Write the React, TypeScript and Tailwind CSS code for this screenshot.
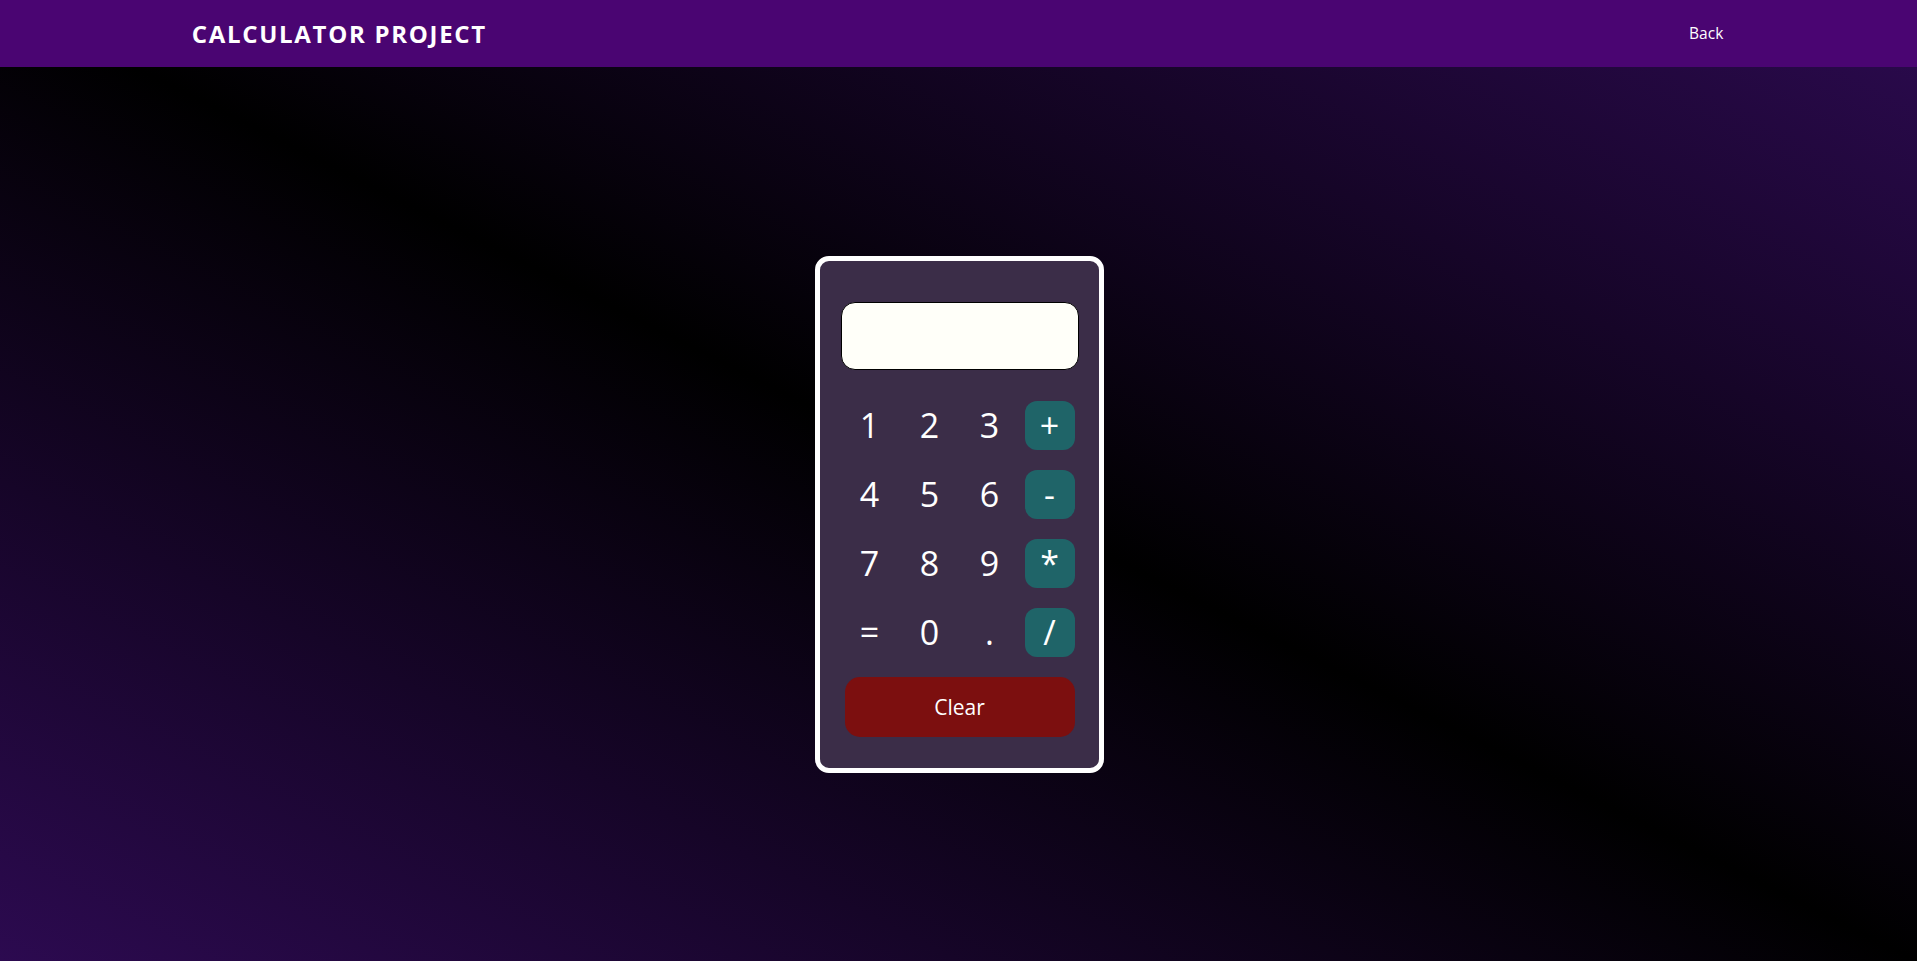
import React from "react";

const keys: { label: string; op?: boolean }[] = [
  { label: "1" }, { label: "2" }, { label: "3" }, { label: "+", op: true },
  { label: "4" }, { label: "5" }, { label: "6" }, { label: "-", op: true },
  { label: "7" }, { label: "8" }, { label: "9" }, { label: "*", op: true },
  { label: "=" }, { label: "0" }, { label: "." }, { label: "/", op: true },
];

export default function App() {
  return (
    <div
      className="min-h-screen w-full flex flex-col bg-[linear-gradient(to_bottom_left,#2c0a50_0%,#000_50%,#2c0a50_100%)]"
      style={{ fontFamily: '"Open Sans", "Liberation Sans", sans-serif' }}
    >
      <header className="h-[67px] bg-[#4a0572] flex items-center justify-between pl-[10%] pr-[calc(10%+2px)] shrink-0">
        <h1 className="text-[24px] font-bold tracking-[1.7px] text-white leading-none">CALCULATOR PROJECT</h1>
        <a className="text-[15.5px] text-white leading-none cursor-pointer">Back</a>
      </header>
      <main className="flex-1 flex items-center justify-center pl-[1px]">
        <div className="w-[289px] h-[517px] border-[5px] border-white rounded-[14px] bg-[#3b2d48] pt-[41px] pl-[21px] pr-[20px] flex flex-col">
          <div className="w-[238px] h-[68px] rounded-[14px] border border-black bg-[#fffff9]" />
          <div className="mt-[31px] ml-[4px] grid grid-cols-[repeat(4,50px)] gap-x-[10px] gap-y-[20px]">
            {keys.map((k) => (
              <button
                key={k.label}
                className={
                  "h-[49px] w-[50px] flex items-center justify-center text-[34px] leading-[49px] text-white rounded-[12px] " +
                  (k.op ? "bg-[#1f6468]" : "bg-transparent")
                }
              >
                {k.label}
              </button>
            ))}
          </div>
          <button className="mt-[20px] ml-[4px] w-[230px] h-[60px] pt-[2px] rounded-[15px] bg-[#7c0f0f] text-white text-[21px]">
            Clear
          </button>
        </div>
      </main>
    </div>
  );
}
